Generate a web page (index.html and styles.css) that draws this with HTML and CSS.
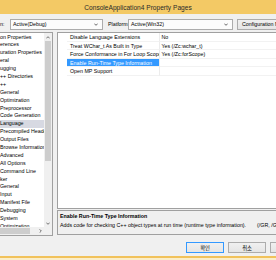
FILE: index.html
```html
<!DOCTYPE html>
<html lang="en">
<head>
    <meta charset="UTF-8">
    <meta name="viewport" content="width=device-width, initial-scale=1.0">
    <title>ConsoleApplication4 Property Pages</title>
    <link rel="stylesheet" href="styles.css">
</head>
<body>
    <div class="titlebar">ConsoleApplication4 Property Pages</div>

    <div class="toolbar">
        <span class="label label-config">n:</span>
        <div class="combo combo-config">
            <span>Active(Debug)</span>
            <svg class="chevron" width="4" height="3" viewBox="0 0 4 3"><path d="M0.3 0.6 L2 2.3 L3.7 0.6" fill="none" stroke="#404040" stroke-width="0.8"/></svg>
        </div>
        <span class="label label-platform">Platform:</span>
        <div class="combo combo-platform">
            <span>Active(Win32)</span>
            <svg class="chevron" width="4" height="3" viewBox="0 0 4 3"><path d="M0.3 0.6 L2 2.3 L3.7 0.6" fill="none" stroke="#404040" stroke-width="0.8"/></svg>
        </div>
        <button class="btn btn-config">Configuration Manager...</button>
    </div>

    <div class="main">
        <div class="tree">
            <div class="tree-body">
                <ul class="tree-items">
                    <li>on Properties</li>
                    <li>erences</li>
                    <li>uration Properties</li>
                    <li>eral</li>
                    <li>ugging</li>
                    <li>++ Directories</li>
                    <li>++</li>
                    <li>General</li>
                    <li>Optimization</li>
                    <li>Preprocessor</li>
                    <li>Code Generation</li>
                    <li class="selected">Language</li>
                    <li>Precompiled Headers</li>
                    <li>Output Files</li>
                    <li>Browse Information</li>
                    <li>Advanced</li>
                    <li>All Options</li>
                    <li>Command Line</li>
                    <li>ker</li>
                    <li>General</li>
                    <li>Input</li>
                    <li>Manifest File</li>
                    <li>Debugging</li>
                    <li>System</li>
                    <li>Optimization</li>
                </ul>
                <div class="vscroll">
                    <div class="arrow">
                        <svg width="4" height="3" viewBox="0 0 4 3"><path d="M0.3 2.4 L2 0.7 L3.7 2.4" fill="none" stroke="#505050" stroke-width="0.8"/></svg>
                    </div>
                    <div class="vthumb"></div>
                    <div class="track"></div>
                    <div class="arrow">
                        <svg width="4" height="3" viewBox="0 0 4 3"><path d="M0.3 0.6 L2 2.3 L3.7 0.6" fill="none" stroke="#505050" stroke-width="0.8"/></svg>
                    </div>
                </div>
            </div>
            <div class="hscroll">
                <div class="hthumb"></div>
                <div class="track"></div>
                <div class="arrow">
                    <svg width="3" height="4" viewBox="0 0 3 4"><path d="M0.6 0.3 L2.3 2 L0.6 3.7" fill="none" stroke="#505050" stroke-width="0.8"/></svg>
                </div>
                <div class="corner"></div>
            </div>
        </div>

        <div class="right">
            <div class="grid">
                <div class="row">
                    <div class="gutter"></div>
                    <div class="name">Disable Language Extensions</div>
                    <div class="value">No</div>
                </div>
                <div class="row">
                    <div class="gutter"></div>
                    <div class="name">Treat WChar_t As Built in Type</div>
                    <div class="value">Yes (/Zc:wchar_t)</div>
                </div>
                <div class="row">
                    <div class="gutter"></div>
                    <div class="name">Force Conformance in For Loop Scope</div>
                    <div class="value">Yes (/Zc:forScope)</div>
                </div>
                <div class="row">
                    <div class="gutter"></div>
                    <div class="name selected">Enable Run-Time Type Information</div>
                    <div class="value"></div>
                </div>
                <div class="row">
                    <div class="gutter"></div>
                    <div class="name">Open MP Support</div>
                    <div class="value"></div>
                </div>
            </div>
            <div class="desc">
                <div class="desc-title">Enable Run-Time Type Information</div>
                <div class="desc-text">Adds code for checking C++ object types at run time (runtime type information).<span class="desc-switch">(/GR, /GR-)</span></div>
            </div>
        </div>
    </div>

    <div class="buttons">
        <button class="btn dialog-btn default">확인</button>
        <button class="btn dialog-btn">취소</button>
        <button class="btn dialog-btn last">적용(A)</button>
    </div>
    <div class="frame-bottom"></div>
</body>
</html>
```

FILE: styles.css
```css
* {
    box-sizing: border-box;
}
body {
    margin: 0;
    width: 276px;
    height: 260px;
    overflow: hidden;
    background-color: #f0f0f0;
    font-family: "Liberation Sans", Arial, "Noto Sans CJK KR", sans-serif;
    font-size: 5.3px;
    color: #000;
}
.titlebar {
    height: 14px;
    background-color: #f3c965;
    display: flex;
    align-items: center;
    justify-content: center;
    font-size: 6.6px;
    color: #2a2a2a;
}
.toolbar {
    height: 18px;
    display: flex;
    align-items: center;
    padding-top: 2px;
    white-space: nowrap;
}
.label-config {
    width: 10px;
    flex-shrink: 0;
}
.label-platform {
    margin-left: 5px;
    width: 20px;
    flex-shrink: 0;
}
.combo {
    height: 11px;
    border: 1px solid #acacac;
    background-color: #fcfcfc;
    display: flex;
    align-items: center;
    justify-content: space-between;
    padding: 0 4px 0 2px;
    flex-shrink: 0;
}
.combo-config {
    width: 93px;
}
.combo-platform {
    width: 105px;
}
.chevron {
    display: block;
}
.btn {
    font-family: "Liberation Sans", Arial, "Noto Sans CJK KR", sans-serif;
    font-size: 5.3px;
    color: #000;
    height: 11px;
    padding: 0;
    border: 1px solid #acacac;
    background: linear-gradient(#f0f0f0, #e5e5e5);
    white-space: nowrap;
    flex-shrink: 0;
}
.btn-config {
    margin-left: 4px;
    width: 70px;
    text-align: left;
    padding-left: 4px;
}
.main {
    height: 204px;
    display: flex;
}
.tree {
    width: 53px;
    flex-shrink: 0;
    border: 1px solid #a0a0a0;
    border-left: none;
    background-color: #fff;
    display: flex;
    flex-direction: column;
}
.tree-body {
    flex: 1;
    display: flex;
    overflow: hidden;
}
.tree-items {
    flex: 1;
    list-style: none;
    margin: 0;
    padding: 0.5px 0 0;
    overflow: hidden;
    white-space: nowrap;
}
.tree-items li {
    height: 7.9px;
    line-height: 7.9px;
    overflow: hidden;
}
.tree-items li.selected {
    background-color: #d7d9e2;
}
.vscroll {
    width: 8px;
    flex-shrink: 0;
    background-color: #f0f0f0;
    display: flex;
    flex-direction: column;
    align-items: center;
}
.arrow {
    width: 8px;
    height: 8px;
    flex-shrink: 0;
    display: flex;
    align-items: center;
    justify-content: center;
}
.vthumb {
    width: 6px;
    height: 120px;
    background-color: #cdcdcd;
}
.track {
    flex: 1;
}
.hscroll {
    height: 8px;
    flex-shrink: 0;
    display: flex;
    background-color: #f0f0f0;
}
.hthumb {
    width: 30px;
    height: 6px;
    margin-top: 1px;
    background-color: #cdcdcd;
}
.corner {
    width: 8px;
    background-color: #f0f0f0;
}
.right {
    flex: 1;
    margin-left: 4px;
    display: flex;
    flex-direction: column;
    gap: 1px;
    padding-bottom: 1px;
    min-width: 0;
}
.grid {
    height: 177px;
    flex-shrink: 0;
    border: 1px solid #a0a0a0;
    border-right: none;
    background-color: #fff;
}
.row {
    display: flex;
    height: 8.6px;
    line-height: 8.6px;
    white-space: nowrap;
}
.gutter {
    width: 9px;
    flex-shrink: 0;
}
.name {
    width: 93px;
    flex-shrink: 0;
    padding-left: 3px;
    border-right: 1px solid #ececec;
    border-bottom: 1px solid #f2f2f2;
    overflow: hidden;
}
.name.selected {
    background-color: #3399ff;
    color: #fff;
}
.value {
    flex: 1;
    padding-left: 1.5px;
    border-bottom: 1px solid #f2f2f2;
    overflow: hidden;
}
.desc {
    flex: 1;
    border: 1px solid #a0a0a0;
    border-right: none;
    padding: 1px 2px 0;
    white-space: nowrap;
    overflow: hidden;
}
.desc-title,
.desc-text {
    height: 8.5px;
    line-height: 8.5px;
}
.desc-title {
    font-weight: bold;
}
.desc-switch {
    margin-left: 11px;
}
.buttons {
    height: 20px;
    display: flex;
    justify-content: flex-end;
    align-items: flex-start;
    gap: 4px;
    padding-top: 6px;
}
.dialog-btn {
    width: 38px;
    text-align: center;
}
.dialog-btn.default {
    border-color: #3399ff;
}
.dialog-btn.last {
    width: 37px;
    margin-right: -31px;
}
.frame-bottom {
    height: 4px;
    border-top: 2px solid #f1c25b;
    background-color: #fbeec9;
}
```
